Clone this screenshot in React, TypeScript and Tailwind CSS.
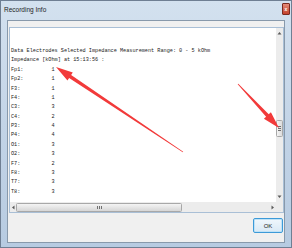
import React from "react";

const electrodes: [string, number][] = [
  ["Fp1", 1],
  ["Fp2", 1],
  ["F3", 1],
  ["F4", 1],
  ["C3", 3],
  ["C4", 2],
  ["P3", 4],
  ["P4", 4],
  ["O1", 3],
  ["O2", 3],
  ["F7", 2],
  ["F8", 3],
  ["T7", 3],
  ["T8", 3],
];

// tapered red annotation arrow, tail -> tip
function arrowPoints(x1: number, y1: number, x2: number, y2: number) {
  const dx = x2 - x1;
  const dy = y2 - y1;
  const len = Math.hypot(dx, dy);
  const ux = dx / len;
  const uy = dy / len;
  const nx = -uy;
  const ny = ux;
  const head = 17;
  const bx = x2 - ux * head;
  const by = y2 - uy * head;
  const tailW = 0.4;
  const shaftW = 1.8;
  const headW = 4.8;
  const pts = [
    [x1 + nx * tailW, y1 + ny * tailW],
    [bx + nx * shaftW, by + ny * shaftW],
    [bx + nx * headW, by + ny * headW],
    [x2, y2],
    [bx - nx * headW, by - ny * headW],
    [bx - nx * shaftW, by - ny * shaftW],
    [x1 - nx * tailW, y1 - ny * tailW],
  ];
  return pts.map((p) => p.join(",")).join(" ");
}

function Tri({ dir }: { dir: "up" | "down" | "left" | "right" }) {
  const d = {
    up: "M0.5 3.5 L2.5 1 L4.5 3.5 Z",
    down: "M0.5 1.5 L2.5 4 L4.5 1.5 Z",
    left: "M3.5 0.5 L1 2.5 L3.5 4.5 Z",
    right: "M1.5 0.5 L4 2.5 L1.5 4.5 Z",
  }[dir];
  return (
    <svg width="5" height="5" viewBox="0 0 5 5">
      <path d={d} fill="#5a5a5a" />
    </svg>
  );
}

export default function App() {
  return (
    <div className="relative w-[292px] h-[248px] overflow-hidden bg-gradient-to-b from-[#d3e1ef] via-[#c3d4e7] to-[#b7cbe1] border border-[#6f7f93] font-['Liberation_Sans',sans-serif]">
      {/* Title bar */}
      <div className="flex items-center justify-between h-[19px] pl-[3px] pr-[1px]">
        <span className="text-[6.5px] text-[#1e1e1e] leading-none">Recording Info</span>
        <div className="w-[8px] h-[12px] mb-[3px] rounded-[1px] bg-gradient-to-b from-[#e48a78] to-[#c3412c] border border-[#7a2a20] flex items-center justify-center">
          <span className="text-white text-[5px] font-bold leading-none">x</span>
        </div>
      </div>

      {/* Client area */}
      <div className="ml-[6px] mr-[6px] h-[223px] bg-[#f0f0f0] border border-[#8899ab] flex flex-col">
        {/* Text box */}
        <div className="mt-[6px] ml-[1px] h-[186px] border border-[#a9bfd6] bg-white grid grid-cols-[1fr_7px] grid-rows-[1fr_10px]">
          <div className="overflow-hidden pt-[19px] pl-[1px] font-['Liberation_Mono',monospace] text-[5.2px] leading-[9.37px] text-[#222] whitespace-pre">
            <div>Data Electrodes Selected Impedance Measurement Range: 0 - 5 kOhm</div>
            <div>Impedance [kOhm] at 15:13:56 :</div>
            {electrodes.map(([name, value]) => (
              <div key={name} className="flex">
                <span className="w-[40.5px]">{name}:</span>
                <span>{value}</span>
              </div>
            ))}
          </div>

          {/* Vertical scrollbar */}
          <div className="bg-[#ececec] flex flex-col items-center">
            <div className="h-[11px] flex items-center">
              <Tri dir="up" />
            </div>
            <div className="h-[81px]" />
            <div className="w-[7px] h-[17px] rounded-[1.5px] border border-[#a8a8a8] bg-gradient-to-r from-[#f4f4f4] to-[#dcdcdc] flex flex-col items-center justify-center gap-[1px]">
              <div className="w-[3px] h-px bg-[#707070]" />
              <div className="w-[3px] h-px bg-[#707070]" />
              <div className="w-[3px] h-px bg-[#707070]" />
            </div>
            <div className="flex-1" />
            <div className="h-[11px] flex items-center">
              <Tri dir="down" />
            </div>
          </div>

          {/* Horizontal scrollbar */}
          <div className="bg-[#ececec] flex items-center">
            <div className="w-[6px] flex justify-center">
              <Tri dir="left" />
            </div>
            <div className="w-[166px] h-[9px] rounded-[1.5px] border border-[#a8a8a8] bg-gradient-to-b from-[#f4f4f4] to-[#d6d6d6] flex items-center justify-center">
              <div className="flex gap-[1px]">
                <div className="w-px h-[3px] bg-[#707070]" />
                <div className="w-px h-[3px] bg-[#707070]" />
                <div className="w-px h-[3px] bg-[#707070]" />
              </div>
            </div>
            <div className="flex-1" />
            <div className="w-[8px] flex justify-center">
              <Tri dir="right" />
            </div>
          </div>
          <div className="bg-[#ececec]" />
        </div>

        {/* Buttons */}
        <div className="flex justify-end mt-[5px] mr-[1px]">
          <button className="w-[30px] h-[15px] rounded-[2px] border border-[#3c9ad8] bg-gradient-to-b from-[#f0f7fc] to-[#d9e9f5] shadow-[inset_0_0_0_1px_#bfe2f7] text-[6px] text-[#222] leading-none font-['Liberation_Sans',sans-serif]">
            OK
          </button>
        </div>
      </div>

      {/* Red annotation arrows */}
      <svg className="absolute left-0 top-0 pointer-events-none" width="292" height="248">
        <polygon points={arrowPoints(182, 151, 55, 66)} fill="#f23a3a" />
        <polygon points={arrowPoints(237, 83, 278, 127)} fill="#f23a3a" />
      </svg>
    </div>
  );
}
